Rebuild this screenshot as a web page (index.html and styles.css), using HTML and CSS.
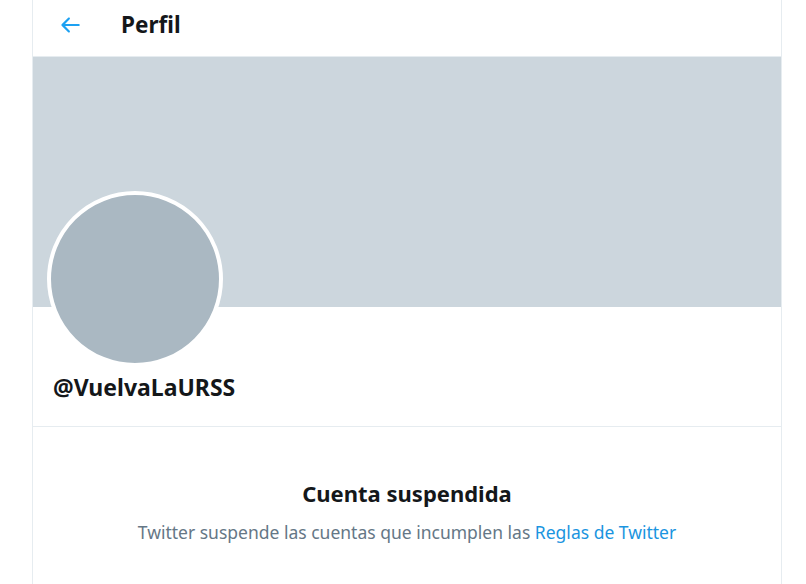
FILE: index.html
```html
<!DOCTYPE html>
<html lang="es">
<head>
<meta charset="utf-8">
<title>Perfil</title>
<link rel="stylesheet" href="styles.css">
</head>
<body>
<main class="column">
  <header class="topbar">
    <a class="back" href="#" aria-label="Atrás">
      <svg viewBox="0 0 24 24" width="26" height="26"><path d="M20 11H7.414l4.293-4.293c.39-.39.39-1.023 0-1.414s-1.023-.39-1.414 0l-6 6c-.39.39-.39 1.023 0 1.414l6 6c.195.195.45.293.707.293s.512-.098.707-.293c.39-.39.39-1.023 0-1.414L7.414 13H20c.553 0 1-.447 1-1s-.447-1-1-1z"/></svg>
    </a>
    <h1 class="title">Perfil</h1>
  </header>
  <section class="profile">
    <div class="banner"></div>
    <div class="avatar"></div>
    <div class="handle">@VuelvaLaURSS</div>
  </section>
  <section class="suspended">
    <h2 class="s-title">Cuenta suspendida</h2>
    <p class="s-text">Twitter suspende las cuentas que incumplen las <a href="#">Reglas de Twitter</a></p>
  </section>
</main>
</body>
</html>
```

FILE: styles.css
```css
* { box-sizing: border-box; }
html, body { margin: 0; padding: 0; background: #ffffff; }
body {
  font-family: "Noto Sans", "Open Sans", sans-serif;
  color: #14171a;
}
.column {
  margin-left: 32px;
  width: 750px;
  min-height: 584px;
  border-left: 1px solid #e6ecf0;
  border-right: 1px solid #e6ecf0;
}
.topbar {
  height: 57px;
  border-bottom: 1px solid #e6ecf0;
  display: flex;
  align-items: center;
  padding-left: 24px;
}
.back {
  display: flex;
  width: 26px;
  height: 26px;
  margin-top: -7px;
}
.back svg { fill: #1da1f2; width: 26px; height: 26px; }
.title {
  margin: -7px 0 0 38px;
  font-size: 22.5px;
  font-weight: 700;
  line-height: 28px;
}
.profile {
  position: relative;
  border-bottom: 1px solid #e6ecf0;
  height: 370px;
}
.banner {
  height: 250px;
  background: #ccd6dd;
}
.avatar {
  position: absolute;
  left: 14px;
  top: 134px;
  width: 176px;
  height: 176px;
  border-radius: 50%;
  background: #aab8c2;
  border: 4px solid #ffffff;
}
.handle {
  margin: 66px 0 0 20px;
  font-size: 23px;
  font-weight: 700;
  line-height: 28px;
}
.suspended {
  text-align: center;
  padding-top: 52px;
}
.s-title {
  margin: 0;
  font-size: 22px;
  font-weight: 700;
  line-height: 28px;
}
.s-text {
  margin: 14px 0 0;
  font-size: 17.5px;
  line-height: 22px;
  color: #657786;
}
.s-text a { color: #1b95e0; text-decoration: none; }
```
